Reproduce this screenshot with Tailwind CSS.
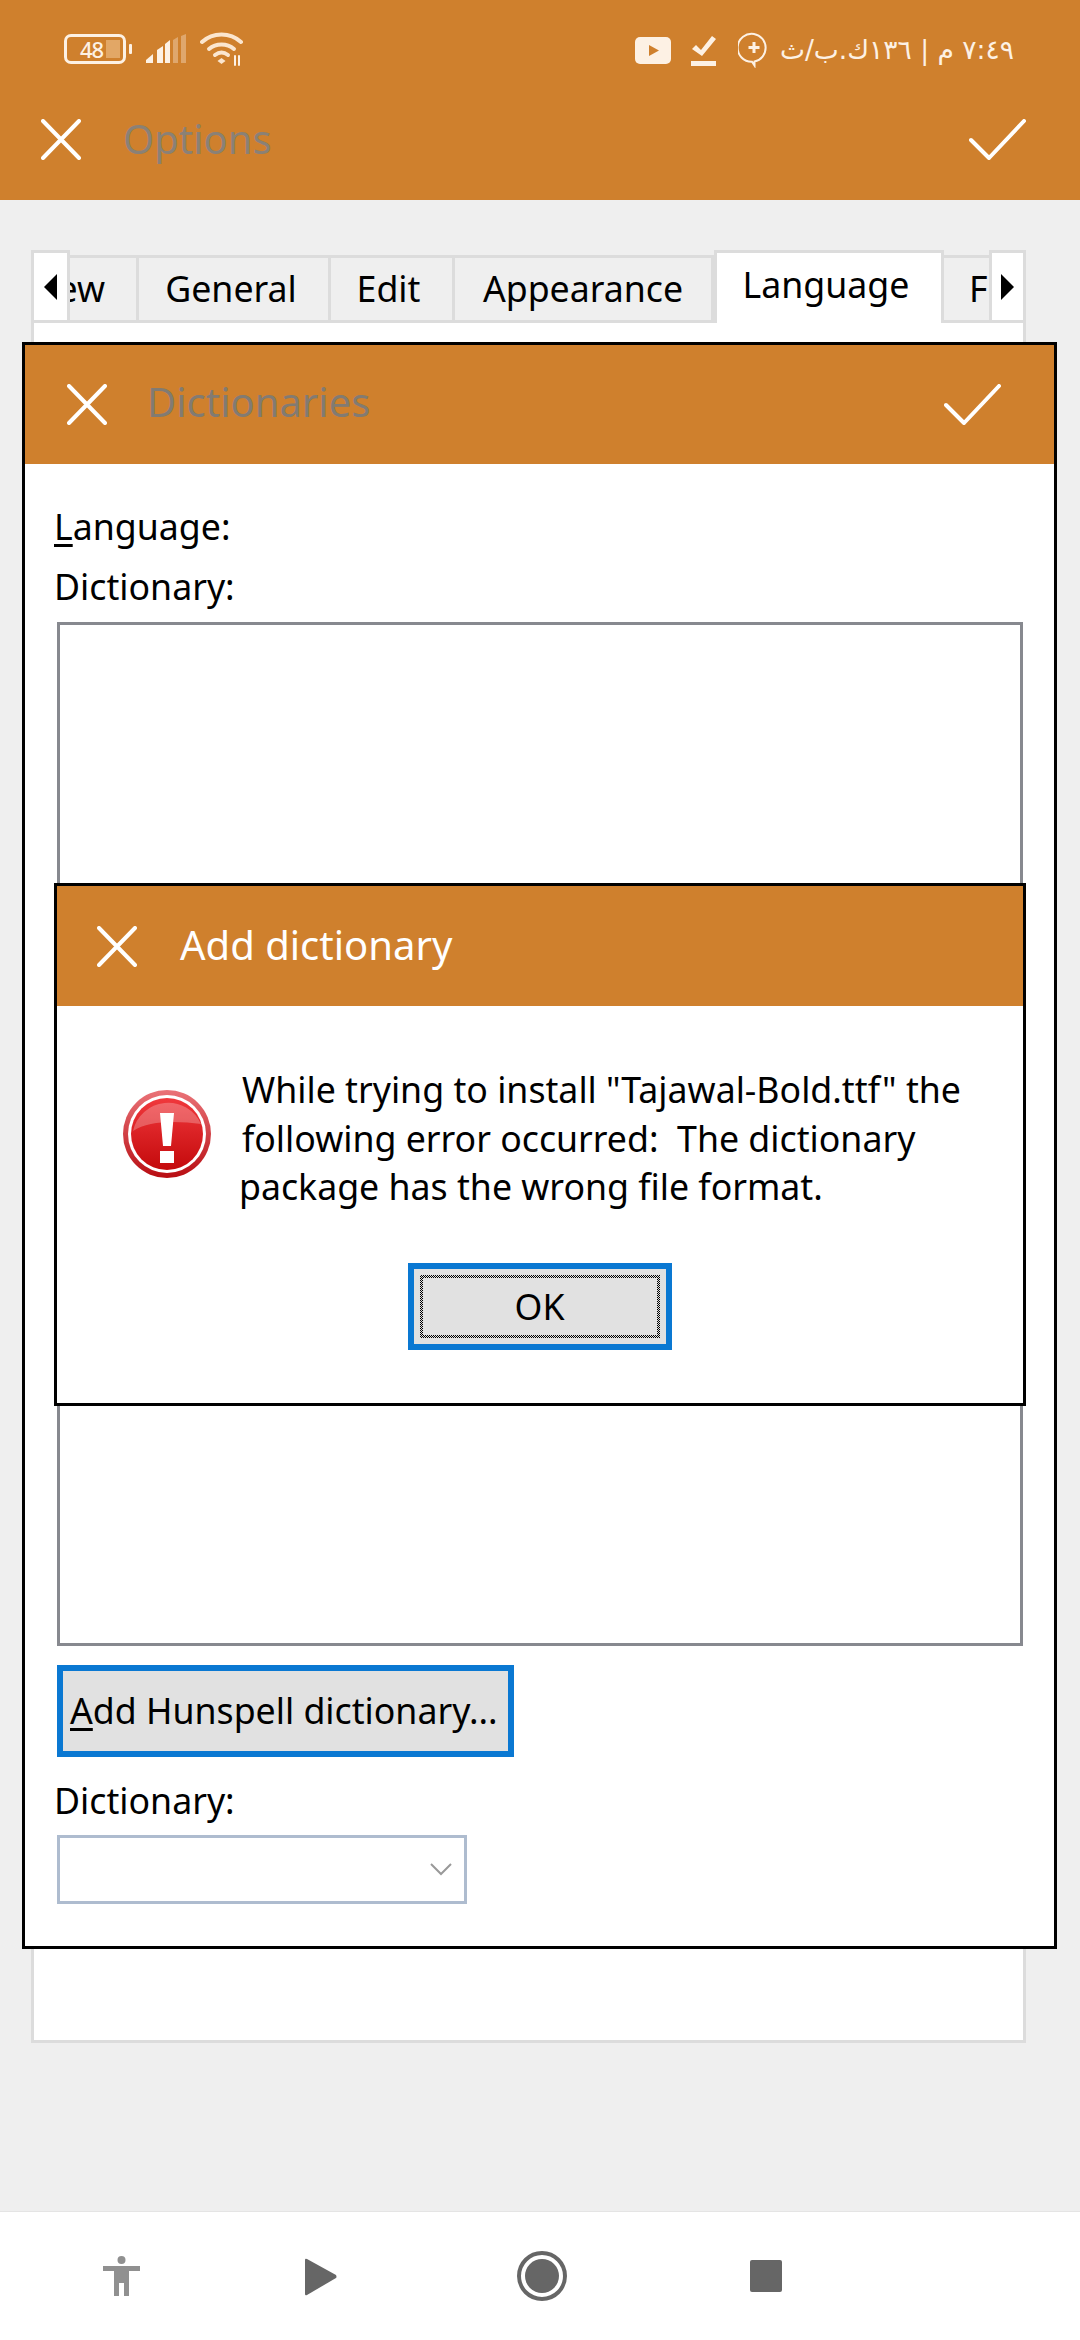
<!DOCTYPE html>
<html lang="en">

<head>
    <meta charset="UTF-8">
    <meta name="viewport" content="width=device-width, initial-scale=1.0">
    <title>Options</title>
    <script src="https://cdn.jsdelivr.net/npm/@tailwindcss/browser@4"></script>
</head>

<body class="bg-[#efefef]">
    <div class="relative w-[1080px] h-[2340px] flex flex-col overflow-hidden bg-[#efefef] text-black text-[35.700px] font-['Noto_Sans',sans-serif]">

        <!-- orange header with status bar -->
        <header class="h-[200px] shrink-0 bg-[#cf802d] flex flex-col">
            <div class="h-[98px] flex items-start justify-between pl-[64px] pr-[66px] pt-[32px] text-[#fdf1e4]">
                <div class="flex items-center gap-[14px]">
                    <div class="relative flex items-center">
                        <div class="w-[62px] h-[30px] border-[3px] border-[#fdf1e4] rounded-[7px] flex items-center pl-[3px]">
                            <div class="relative w-[50px] h-[18px] flex items-center pl-[10px]">
                                <div class="absolute right-[0px] top-0 h-[18px] w-[14px] bg-[#e2a766]"></div>
                                <span class="relative text-[22px] leading-none font-medium tracking-[-1px]">48</span>
                            </div>
                        </div>
                        <div class="w-[3px] h-[10px] ml-[3px] bg-[#fdf1e4] rounded-[1px]"></div>
                    </div>
                    <svg class="w-[40px] h-[30px]" viewBox="0 0 40 30" fill="#fdf1e4">
                        <path d="M0 29v-3l7-6v9z" />
                        <path d="M11 29V16l6-4v17z" />
                        <path d="M19 29V10l5-4v23z" />
                        <path d="M27 29V6l5-3v26z" opacity=".35" />
                        <path d="M35 29V2l5-2v29z" opacity=".35" />
                    </svg>
                    <svg class="w-[44px] h-[34px]" viewBox="0 0 44 34" fill="none" stroke="#fbe6cf" stroke-width="4" stroke-linecap="round">
                        <path d="M2 10c11-10 28-10 39 0" />
                        <path d="M9 17c7-6 18-6 25 0" />
                        <path d="M15 23c4-3 9-3 13 0" />
                        <path d="M21.500 26l4 3-4 3-4-3z" fill="#fbe6cf" stroke="none" />
                        <path d="M35 24v9M39 33v-9" stroke-width="2" stroke="#fdf1e4" />
                    </svg>
                </div>
                <div class="flex items-center">
                    <svg class="w-[36px] h-[27px]" viewBox="0 0 36 27">
                        <rect width="36" height="27" rx="5" fill="#fdf1e4" />
                        <path d="M14 8l10 5.500-10 5.500z" fill="#cf802d" />
                    </svg>
                    <svg class="ml-[20px] w-[26px] h-[31px]" viewBox="0 0 26 31" fill="#fdf1e4">
                        <path d="M1 14l4-4 5 5L21 1l4 3-14 17z" />
                        <rect y="26" width="25" height="5" />
                    </svg>
                    <svg class="ml-[21px] w-[32px] h-[36px]" viewBox="0 0 32 36" fill="none" stroke="#fdf1e4" stroke-width="2">
                        <path d="M16 2a14 14 0 1 0-2 27.800l2.500 3.700v-4A14 14 0 0 0 16 2z" />
                        <path d="M16 10v11M10.500 15.500h11" stroke-width="3" />
                    </svg>
                    <span dir="rtl" class="ml-[10px] text-[26.500px] leading-[34px] font-['DejaVu_Sans',sans-serif]">٧:٤٩ م | ١٣٦ك.ب/ث</span>
                </div>
            </div>
            <div class="flex-1 flex items-start justify-between pl-[41px] pr-[54px] pt-[21px]">
                <div class="flex items-center gap-[42px]">
                    <svg class="w-[40px] h-[41px]" viewBox="0 0 40 41" stroke="#fff" stroke-width="4" stroke-linecap="round"><path d="M2 2l36 37M38 2L2 39" /></svg>
                    <span class="relative top-[-1px] text-[#8a8176] text-[40px] leading-[41px]">Options</span>
                </div>
                <svg class="w-[57px] h-[41px]" viewBox="0 0 57 41" fill="none" stroke="#fff" stroke-width="4" stroke-linecap="round" stroke-linejoin="round"><path d="M2 21l18 18L55 2" /></svg>
            </div>
        </header>

        <!-- options page behind the dialogs -->
        <main class="flex-1 pl-[31px] pr-[54px] pt-[50px]">
            <div class="relative h-[73px] overflow-hidden">
                <div class="flex items-end h-full w-[1100px] ml-[-40px] border-b-[3px] border-[#dcdcdc]">
                    <div class="w-[148px] h-[65px] border-t-[3px] border-r-[3px] border-[#dcdcdc] pr-[31px] text-right leading-[60px]">View</div>
                    <div class="w-[192px] h-[65px] border-t-[3px] border-r-[3px] border-[#dcdcdc] pr-[5px] text-center leading-[60px]">General</div>
                    <div class="w-[124px] h-[65px] border-t-[3px] border-r-[3px] border-[#dcdcdc] pr-[6px] text-center leading-[60px]">Edit</div>
                    <div class="w-[259px] h-[65px] border-t-[3px] border-r-[3px] border-[#dcdcdc] text-center leading-[60px]">Appearance</div>
                    <div class="relative top-[3px] w-[230px] h-[73px] bg-white border-x-[3px] border-t-[3px] border-[#dcdcdc] pr-[6px] text-center leading-[62px]">Language</div>
                    <div class="w-[100px] h-[65px] border-t-[3px] border-[#dcdcdc] pl-[25px] leading-[60px]">Fonts</div>
                </div>
                <button class="absolute left-0 top-0 w-[39px] h-[70px] bg-white border-[3px] border-b-0 border-[#dcdcdc] flex items-center justify-center">
                    <svg class="w-[13px] h-[26px]" viewBox="0 0 13 26"><path d="M13 0v26L0 13z" /></svg>
                </button>
                <button class="absolute right-0 top-0 w-[37px] h-[70px] bg-white border-[3px] border-b-0 border-[#dcdcdc] flex items-center justify-center">
                    <svg class="w-[13px] h-[26px]" viewBox="0 0 13 26"><path d="M0 0v26l13-13z" /></svg>
                </button>
            </div>
            <div class="h-[1720px] bg-white border-[3px] border-t-0 border-[#dcdcdc]"></div>
        </main>

        <!-- android nav bar -->
        <nav class="h-[129px] shrink-0 bg-white border-t border-[#e4e4e4] flex items-center">
            <svg class="ml-[103px] w-[37px] h-[40px]" viewBox="0 0 37 40" fill="#909090">
                <ellipse cx="18.500" cy="4" rx="4" ry="4" />
                <path d="M0 10h37v5H26v25h-5V27h-5v13h-5V15H0z" />
            </svg>
            <svg class="ml-[165px] mt-[2px] w-[32px] h-[38px]" viewBox="0 0 32 38" fill="#666">
                <path d="M0 2q0-2 2-1l29 16q1 2 0 3L2 37q-2 1-2-1z" />
            </svg>
            <svg class="ml-[180px] w-[50px] h-[50px]" viewBox="0 0 50 50">
                <circle cx="25" cy="25" r="23" fill="none" stroke="#666" stroke-width="4" />
                <circle cx="25" cy="25" r="17" fill="#666" />
            </svg>
            <div class="ml-[183px] w-[32px] h-[32px] rounded-[2px] bg-[#666]"></div>
        </nav>

        <!-- Dictionaries window -->
        <section class="absolute left-[22px] top-[342px] w-[1035px] h-[1607px] bg-white border-[3px] border-black flex flex-col">
            <div class="h-[119px] shrink-0 bg-[#cf802d] flex items-center justify-between pl-[42px] pr-[53px]">
                <div class="flex items-center gap-[40px]">
                    <svg class="w-[40px] h-[41px]" viewBox="0 0 40 41" stroke="#fff" stroke-width="4" stroke-linecap="round"><path d="M2 2l36 37M38 2L2 39" /></svg>
                    <span class="relative top-[-3px] text-[#827b72] text-[40px] leading-[41px]">Dictionaries</span>
                </div>
                <svg class="w-[57px] h-[41px]" viewBox="0 0 57 41" fill="none" stroke="#fff" stroke-width="4" stroke-linecap="round" stroke-linejoin="round"><path d="M2 21l18 18L55 2" /></svg>
            </div>
            <div class="flex-1 flex flex-col items-start pl-[29px] pt-[35px]">
                <div class="leading-[54px] h-[60px]"><span class="underline underline-offset-4">L</span>anguage:</div>
                <div class="leading-[54px] h-[60px]">Dictionary:</div>
                <div class="ml-[3px] mt-[3px] w-[966px] h-[1024px] border-[3px] border-[#87898f]"></div>
                <button class="ml-[3px] mt-[19px] w-[457px] h-[92px] bg-[#e1e1e1] border-[6px] border-[#0a78d2] pl-[7px] text-left whitespace-nowrap"><span class="underline underline-offset-4">A</span>dd Hunspell dictionary...</button>
                <div class="mt-[16px] leading-[54px] h-[54px]">Dictionary:</div>
                <div class="ml-[3px] mt-[8px] w-[410px] h-[69px] border-[3px] border-[#aebccf] flex items-center justify-end pr-[12px]">
                    <svg class="w-[22px] h-[13px]" viewBox="0 0 22 13" fill="none" stroke="#999" stroke-width="2"><path d="M1 1l10 10L21 1" /></svg>
                </div>
            </div>
        </section>

        <!-- Add dictionary message box -->
        <section class="absolute left-[54px] top-[883px] w-[972px] h-[523px] bg-white border-[3px] border-black flex flex-col">
            <div class="h-[120px] shrink-0 bg-[#cf802d] flex items-center pl-[40px] gap-[43px] text-white">
                <svg class="w-[40px] h-[41px]" viewBox="0 0 40 41" stroke="#fff" stroke-width="4" stroke-linecap="round"><path d="M2 2l36 37M38 2L2 39" /></svg>
                <span class="relative top-[-2px] text-[40px] leading-[41px]">Add dictionary</span>
            </div>
            <div class="flex pl-[66px] pt-[59px] h-[257px]">
                <svg class="w-[88px] h-[88px] mt-[25px] shrink-0" viewBox="0 0 88 88">
                    <defs>
                        <linearGradient id="errFill" x1="0" y1="0" x2="0" y2="1">
                            <stop offset="0" stop-color="#f0383c" />
                            <stop offset="1" stop-color="#c40a0c" />
                        </linearGradient>
                        <linearGradient id="errRim" x1="0" y1="0" x2="0" y2="1">
                            <stop offset="0" stop-color="#ea7378" />
                            <stop offset="1" stop-color="#b80d12" />
                        </linearGradient>
                    </defs>
                    <circle cx="44" cy="44" r="44" fill="url(#errRim)" />
                    <circle cx="44" cy="44" r="39" fill="#fff" />
                    <circle cx="44" cy="44" r="36" fill="url(#errFill)" />
                    <path d="M10 41A36 36 0 0 1 78 34C55 31 26 30 10 41z" fill="#fff" opacity=".25" />
                    <path d="M37 23h14l-3 33h-8z" fill="#fff" />
                    <rect x="37" y="61" width="14" height="12" fill="#fff" />
                </svg>
                <div class="ml-[31px] leading-[48.500px]">
                    <div class="whitespace-pre">While trying to install "Tajawal-Bold.ttf" the</div>
                    <div class="whitespace-pre">following error occurred:  The dictionary</div>
                    <div class="whitespace-pre ml-[-3px]">package has the wrong file format.</div>
                </div>
            </div>
            <div class="flex justify-center">
                <button class="ml-[-1px] w-[264px] h-[87px] border-[6px] border-[#0a78d2] bg-[#e1e1e1] p-[6px]">
                    <span class="block h-full p-[3px] bg-[repeating-conic-gradient(#000_0_25%,#e1e1e1_0_50%)] bg-[length:2px_2px]">
                        <span class="flex items-center justify-center h-full bg-[#e1e1e1]">OK</span>
                    </span>
                </button>
            </div>
        </section>
    </div>
</body>

</html>
